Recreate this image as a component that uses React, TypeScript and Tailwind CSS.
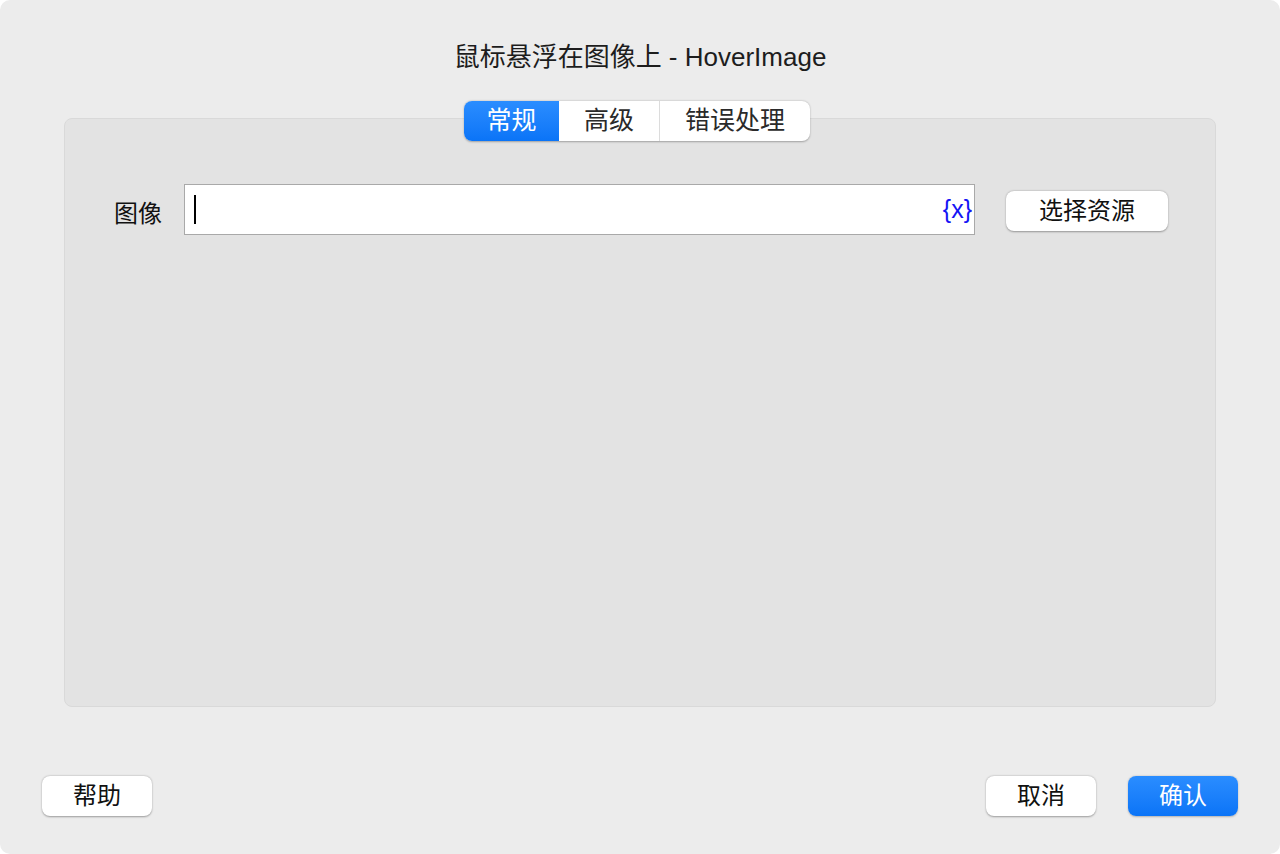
const font = "font-['Liberation_Sans','Noto_Sans_CJK_SC',sans-serif]";

const Tabs = ["常规", "高级", "错误处理"];

export default function App() {
  return (
    <div className={`w-[1280px] h-[854px] bg-white ${font}`}>
      <div className="w-full h-full flex flex-col bg-[#ececec] rounded-[10px] overflow-hidden">
        {/* title */}
        <div className="pt-[42px] h-[72px] text-center text-[26px] leading-[30px] text-[#1d1d1d]">
          鼠标悬浮在图像上 - HoverImage
        </div>

        {/* segmented tabs */}
        <div className="mt-[29px] flex justify-center relative z-10">
          <div className="mr-[6px] flex h-[40px] rounded-[8px] bg-white shadow-[0_0.5px_2px_rgba(0,0,0,0.3)] overflow-hidden text-[25px]">
            <div className="w-[95px] flex items-center justify-center text-white bg-linear-to-b from-[#2a8dff] to-[#0a74f7]">
              {Tabs[0]}
            </div>
            <div className="w-[101px] flex items-center justify-center text-[#2a2a2a] border-r border-[#dcdcdc]">
              {Tabs[1]}
            </div>
            <div className="w-[150px] flex items-center justify-center text-[#2a2a2a]">
              {Tabs[2]}
            </div>
          </div>
        </div>

        {/* panel */}
        <div className="mx-[64px] -mt-[23px] h-[589px] rounded-[8px] bg-[#e3e3e3] border border-[#d9d9d9]">
          <div className="mt-[65px] flex items-start">
            <div className="w-[119px] pr-[22px] h-[51px] leading-[51px] pt-[4px] text-right text-[24px] text-[#111]">图像</div>
            <div className="w-[791px] h-[51px] bg-white border border-[#a9a9a9] flex items-center">
              <span className="ml-[9px] w-[2px] h-[29px] bg-black" />
              <span className="ml-auto mr-[2px] text-[25px] text-[#1515f5]">{"{x}"}</span>
            </div>
            <button className="ml-[31px] mt-[7px] w-[162px] h-[40px] rounded-[8px] bg-white shadow-[0_0.5px_2px_rgba(0,0,0,0.35)] text-[24px] text-[#111]">
              选择资源
            </button>
          </div>
        </div>

        {/* footer */}
        <div className="mt-auto mb-[38px] px-[42px] flex items-center">
          <button className="w-[110px] h-[40px] rounded-[8px] bg-white shadow-[0_0.5px_2px_rgba(0,0,0,0.35)] text-[24px] text-[#111]">
            帮助
          </button>
          <div className="ml-auto flex gap-[32px]">
            <button className="w-[110px] h-[40px] rounded-[8px] bg-white shadow-[0_0.5px_2px_rgba(0,0,0,0.35)] text-[24px] text-[#111]">
              取消
            </button>
            <button className="w-[110px] h-[40px] rounded-[8px] bg-linear-to-b from-[#2a8dff] to-[#0a74f7] shadow-[0_0.5px_2px_rgba(0,0,0,0.25)] text-[24px] text-white">
              确认
            </button>
          </div>
        </div>
      </div>
    </div>
  );
}
